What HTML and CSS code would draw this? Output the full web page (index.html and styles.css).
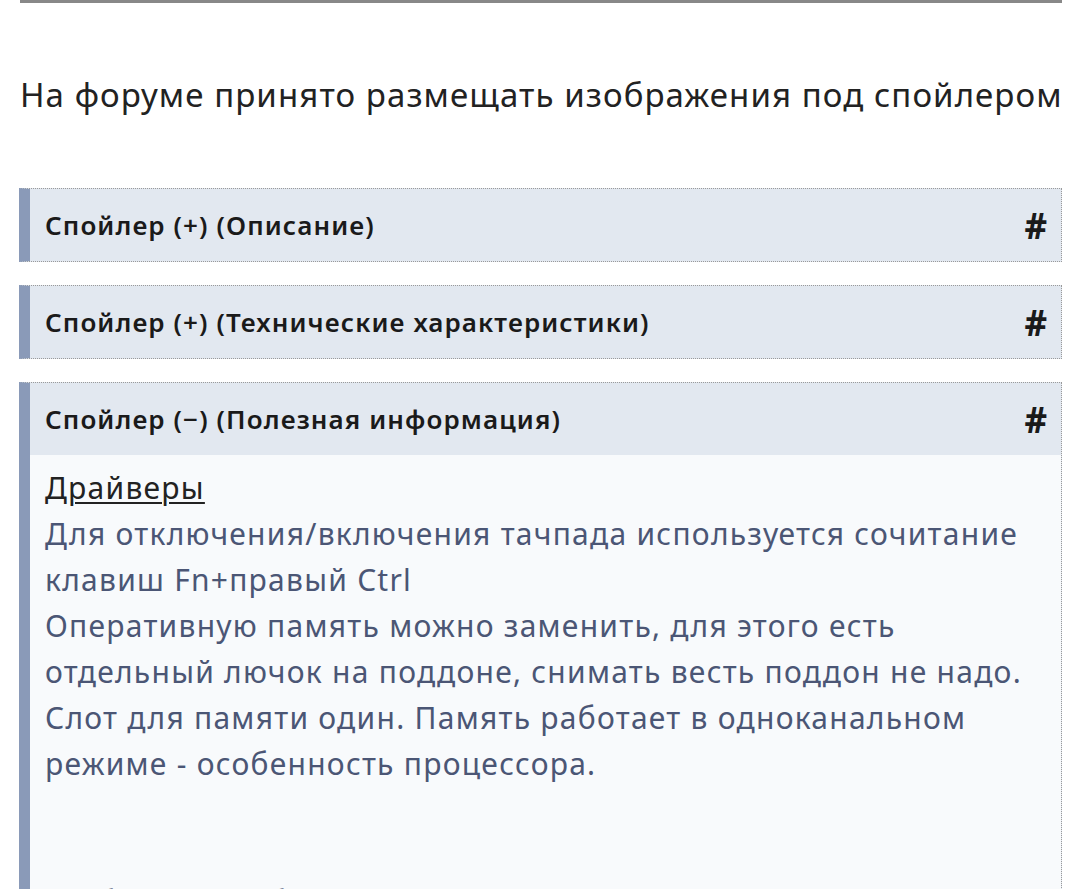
FILE: index.html
```html
<!DOCTYPE html>
<html lang="ru">
<head>
<meta charset="utf-8">
<link rel="stylesheet" href="styles.css">
</head>
<body>
<div class="page">
  <hr class="rule">
  <p class="lead">На форуме принято размещать изображения под спойлером</p>

  <div class="spoiler">
    <div class="sp-head"><span>Спойлер (+) (Описание)</span><span class="hash">#</span></div>
  </div>

  <div class="spoiler">
    <div class="sp-head"><span>Спойлер (+) (Технические характеристики)</span><span class="hash">#</span></div>
  </div>

  <div class="spoiler open">
    <div class="sp-head"><span>Спойлер (−) (Полезная информация)</span><span class="hash">#</span></div>
    <div class="sp-body">
      <a class="link">Драйверы</a><br>
      Для отключения/включения тачпада используется сочитание клавиш Fn+правый Ctrl<br>
      Оперативную память можно заменить, для этого есть отдельный лючок на поддоне, снимать весть поддон не надо. Слот для памяти один. Память работает в одноканальном режиме - особенность процессора.<br>
      <br>
      <br>
      Разборка ноутбука: видео по замене клавиатуры и чистке системы охлаждения
    </div>
  </div>
</div>
</body>
</html>
```

FILE: styles.css
```css
html, body {
  margin: 0;
  padding: 0;
  background: #ffffff;
}
body {
  font-family: "Noto Sans", "Open Sans", sans-serif;
  overflow: hidden;
}
.page {
  margin: 0 18px 0 19px;
}
.rule {
  margin: 0 0 0 1px;
  border: 0;
  height: 3px;
  background: #888888;
}
.lead {
  margin: 70px 0 0 1px;
  font-size: 33px;
  letter-spacing: 1.08px;
  line-height: 44px;
  color: #222;
  white-space: nowrap;
}
.spoiler {
  margin-top: 23px;
  border: 1px dotted #9a9a9a;
  border-left: 11px solid #8a9ab8;
  background: #e2e8f0;
}
.lead + .spoiler {
  margin-top: 71px;
}
.sp-head {
  display: flex;
  justify-content: space-between;
  align-items: center;
  height: 72px;
  padding: 0 14px 0 15px;
  font-weight: 600;
  font-size: 26px;
  letter-spacing: 1.1px;
  color: #1a1a1a;
}
.hash {
  font-size: 35px;
  font-weight: 700;
  letter-spacing: 0;
}
.sp-body {
  background: #f8fafc;
  padding: 10px 15px 0 15px;
  font-size: 30px;
  letter-spacing: 1.25px;
  line-height: 46px;
  color: #4b5675;
  height: 480px;
}
.link {
  color: #222;
  text-decoration: underline;
  text-decoration-thickness: 2px;
  text-underline-offset: 3px;
}
```
